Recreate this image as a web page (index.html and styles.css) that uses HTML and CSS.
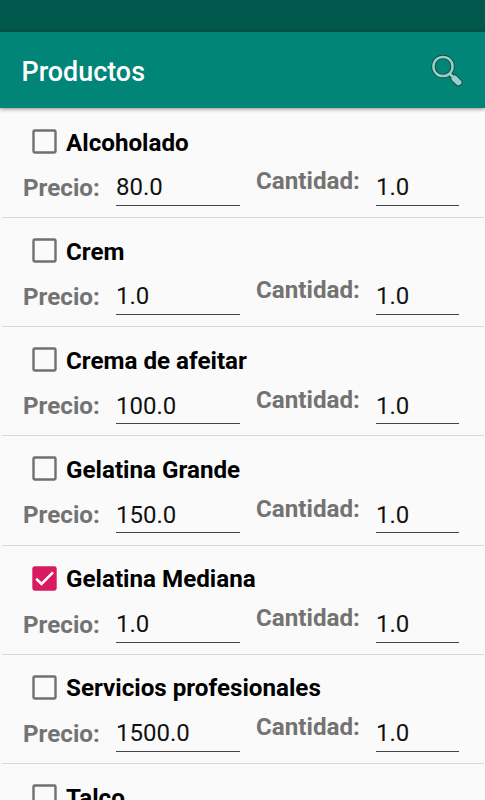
FILE: index.html
```html
<!DOCTYPE html>
<html lang="es">
<head>
  <meta charset="UTF-8">
  <meta name="viewport" content="width=device-width, initial-scale=1.0">
  <title>Productos</title>
  <link rel="stylesheet" href="styles.css">
</head>
<body>

  <div class="status-bar"></div>
  <header class="toolbar">
    <h1>Productos</h1>
    <svg class="search" width="34" height="34" viewBox="0 0 34 34">
      <path d="M20.5 20.5l3 3" stroke="#12463f" stroke-width="5"/>
      <path d="M24.5 24.5l4 3.8" stroke="#12463f" stroke-width="7.8" stroke-linecap="round"/>
      <circle cx="13" cy="12.5" r="9.6" fill="none" stroke="#12463f" stroke-width="4.2"/>
      <circle cx="13" cy="12.5" r="9.6" fill="none" stroke="#99cfc9" stroke-width="2.5"/>
      <path d="M20 20l3.5 3.5" stroke="#99cfc9" stroke-width="2.6"/>
      <path d="M24.5 24.5l4 3.8" stroke="#99cfc9" stroke-width="6" stroke-linecap="round"/>
    </svg>
  </header>

  <main class="products"></main>

  <script>
    const products = [
      { name: "Alcoholado", price: "80.0", amount: "1.0" },
      { name: "Crem", price: "1.0", amount: "1.0" },
      { name: "Crema de afeitar", price: "100.0", amount: "1.0" },
      { name: "Gelatina Grande", price: "150.0", amount: "1.0" },
      { name: "Gelatina Mediana", price: "1.0", amount: "1.0", checked: true },
      { name: "Servicios profesionales", price: "1500.0", amount: "1.0" },
      { name: "Talco", price: "1.0", amount: "1.0" }
    ];

    let list = document.querySelector(".products");
    list.innerHTML = products.map(product => `
      <div class="product">
        <label class="name">
          <input class="check" type="checkbox" ${product.checked ? "checked" : ""}>
          <svg class="box" width="25" height="25" viewBox="0 0 25 25">
            <rect class="frame" x="1.5" y="1.5" width="22" height="22" rx="1.2"/>
            <path class="tick" d="M4.2 12.8l5.3 5.2L21 6.4"/>
          </svg>
          <span>${product.name}</span>
        </label>
        <div class="fields">
          <span class="price-label">Precio:</span>
          <input class="price" type="text" value="${product.price}" aria-label="Precio">
          <span class="amount-label">Cantidad:</span>
          <input class="amount" type="text" value="${product.amount}" aria-label="Cantidad">
        </div>
      </div>`).join("");
  </script>
</body>
</html>
```

FILE: styles.css
```css
* {
  box-sizing: border-box;
}

body {
  margin: 0;
  height: 100vh;
  overflow: hidden;
  background-color: #fafafa;
  font-family: Roboto, sans-serif;
  font-size: 24px;
}

.status-bar {
  height: 32px;
  background-color: #00574b;
}

.toolbar {
  display: flex;
  align-items: center;
  justify-content: space-between;
  height: 75.5px;
  padding: 2px 21px 0 21.5px;
  background-color: #008577;
  box-shadow: 0 1px 4px rgba(0, 0, 0, 0.45);
}

.toolbar h1 {
  margin: 0;
  padding-top: 2px;
  color: white;
  font-size: 26.9px;
  font-weight: 500;
}

.products {
  padding: 1.25px 1.5px 0;
}

.product {
  height: 109.2px;
  padding: 20px 25px 0 21.5px;
  border-bottom: 1px solid #d8d8d8;
}

.name {
  display: flex;
  align-items: center;
  gap: 9px;
  height: 25px;
  padding-left: 9px;
  color: black;
  font-size: 24.2px;
  font-weight: bold;
}

.name span {
  padding-top: 2.5px;
}

.check {
  display: none;
}

.frame {
  fill: none;
  stroke: #707070;
  stroke-width: 2.4;
}

.tick {
  display: none;
  fill: none;
  stroke: white;
  stroke-width: 2.6;
}

.check:checked + .box .frame {
  fill: #d81b60;
  stroke: #d81b60;
}

.check:checked + .box .tick {
  display: block;
}

.fields {
  display: grid;
  grid-template-columns: 93px 124px 16px 103px 1fr;
  height: 52px;
}

.price-label,
.amount-label {
  color: #737373;
  font-size: 24.2px;
  font-weight: bold;
  line-height: 28px;
}

.price-label {
  padding-top: 20px;
}

.amount-label {
  grid-column: 4;
  padding-top: 13.5px;
}

.price,
.amount {
  width: 100%;
  height: 34px;
  margin-top: 18px;
  padding: 0 0 2px;
  border: 0;
  border-bottom: 1px solid #444;
  outline: 0;
  background: none;
  color: #111;
  font: inherit;
}

.amount {
  width: 83px;
  margin-left: 17px;
}
```
